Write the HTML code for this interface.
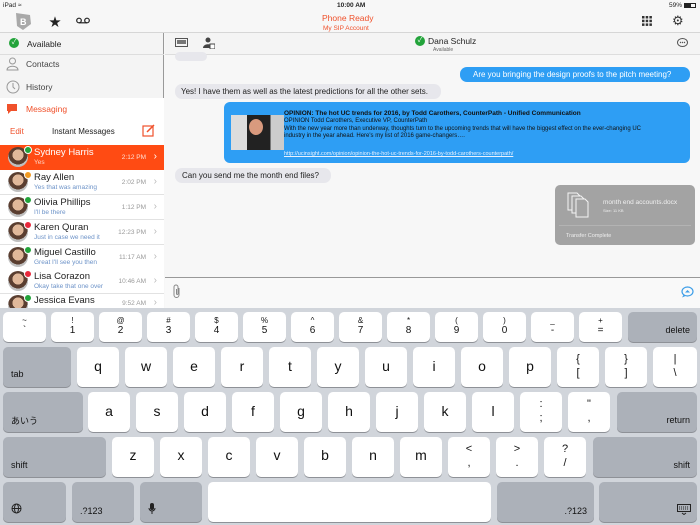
<!DOCTYPE html>
<html><head><meta charset="utf-8"><style>
*{margin:0;padding:0;box-sizing:border-box}
body{width:700px;height:525px;overflow:hidden;background:#f7f7f7;font-family:"Liberation Sans","Noto Sans CJK JP",sans-serif;position:relative;color:#222}
.a{position:absolute;white-space:nowrap}
.k{position:absolute;background:#fff;border-radius:5px;box-shadow:0 1px 0 #8e9197;text-align:center;color:#111}
.g{background:#acb1b9;color:#111}
.row{position:absolute;left:0;width:164px;height:25px;background:#fff;border-bottom:1px solid #e2e2e2}
.av{position:absolute;left:8px;top:2px;width:20px;height:20px;border-radius:50%;background:radial-gradient(circle at 50% 40%,#e0b89a 0 35%,#5a3e30 36% 60%,#bfbfbf 61%)}
.st{position:absolute;left:24px;top:1px;width:8px;height:8px;border-radius:50%;border:1px solid #fff}
.nm{position:absolute;left:34px;top:2px;font-size:9.5px;color:#222;white-space:nowrap}
.ms{position:absolute;left:34px;top:14px;font-size:6.5px;color:#6d93c8;white-space:nowrap}
.tm{position:absolute;right:18px;top:9px;font-size:6.5px;color:#999}
.ch{position:absolute;right:7px;top:6px;font-size:10px;color:#bbb}
</style></head><body>
<div class="a" style="left:0;top:0;width:700px;height:33px;background:#f7f7f7;border-bottom:1px solid #d6d6d6"></div>
<div class="a" style="left:3px;top:2px;font-size:6.5px">iPad ≈</div>
<div class="a" style="left:337px;top:2px;font-size:6.5px;font-weight:bold">10:00 AM</div>
<div class="a" style="left:669px;top:2px;font-size:6.5px">59%</div>
<div class="a" style="left:684px;top:3px;width:12px;height:5px;border:1px solid #222;"><div style="width:6px;height:3px;background:#222"></div></div>
<svg class="a" style="left:14px;top:12px" width="18" height="19"><path d="M2 1L16 3L17 12L9 18L3 14Z" fill="#a9a9a9"/><text x="6" y="13" font-size="9" fill="#fff" font-family="Liberation Sans" font-weight="bold">B</text></svg>
<div class="a" style="left:49px;top:13px;font-size:12px">★</div>
<svg class="a" style="left:76px;top:17px" width="14" height="7"><circle cx="3" cy="3.5" r="2.3" fill="none" stroke="#222" stroke-width="1.2"/><circle cx="11" cy="3.5" r="2.3" fill="none" stroke="#222" stroke-width="1.2"/><line x1="3" y1="5.8" x2="11" y2="5.8" stroke="#222" stroke-width="1.2"/></svg>
<div class="a" style="left:322px;top:13px;font-size:8.5px;color:#f0512b">Phone Ready</div>
<div class="a" style="left:323px;top:25px;font-size:6.5px;color:#f0512b">My SIP Account</div>
<svg class="a" style="left:642px;top:16px" width="10" height="10"><g fill="#333"><rect x="0" y="0" width="2.5" height="2.5"/><rect x="3.7" y="0" width="2.5" height="2.5"/><rect x="7.4" y="0" width="2.5" height="2.5"/><rect x="0" y="3.7" width="2.5" height="2.5"/><rect x="3.7" y="3.7" width="2.5" height="2.5"/><rect x="7.4" y="3.7" width="2.5" height="2.5"/><rect x="0" y="7.4" width="2.5" height="2.5"/><rect x="3.7" y="7.4" width="2.5" height="2.5"/><rect x="7.4" y="7.4" width="2.5" height="2.5"/></g></svg>
<div class="a" style="left:672px;top:13px;font-size:13px;color:#333">⚙</div>

<div class="a" style="left:0;top:33px;width:164px;height:277px;background:#f4f4f4;border-right:1px solid #999"></div>
<div class="a" style="left:0;top:33px;width:164px;height:22px;border-bottom:1px solid #ddd"></div>
<div class="a" style="left:9px;top:38px;width:10px;height:10px;border-radius:50%;background:#22a33a;color:#fff;font-size:7px;text-align:center;line-height:10px">✓</div>
<div class="a" style="left:27px;top:39px;font-size:8.5px">Available</div>
<svg class="a" style="left:6px;top:57px" width="13" height="14"><circle cx="6.5" cy="4" r="3" fill="none" stroke="#999"/><path d="M1 13C1 8 12 8 12 13Z" fill="none" stroke="#999"/></svg>
<div class="a" style="left:26px;top:59px;font-size:8.5px;color:#444">Contacts</div>
<svg class="a" style="left:6px;top:80px" width="14" height="14"><circle cx="7" cy="7" r="6" fill="none" stroke="#999"/><path d="M7 3V7L9 9" fill="none" stroke="#999"/></svg>
<div class="a" style="left:26px;top:82px;font-size:8.5px;color:#444">History</div>
<div class="a" style="left:0;top:98px;width:164px;height:47px;background:#fff"></div>
<svg class="a" style="left:6px;top:103px" width="12" height="12"><path d="M1 1H11V8H5L2 11V8H1Z" fill="#f0512b"/></svg>
<div class="a" style="left:26px;top:104px;font-size:8.5px;color:#f0512b">Messaging</div>
<div class="a" style="left:10px;top:127px;font-size:8px;color:#f0512b">Edit</div>
<div class="a" style="left:52px;top:127px;font-size:8px;color:#222">Instant Messages</div>
<svg class="a" style="left:142px;top:124px" width="13" height="13"><rect x="1" y="2" width="10" height="10" fill="none" stroke="#f0512b" stroke-width="1.2"/><path d="M5 8L12 1" stroke="#f0512b" stroke-width="1.5"/></svg>

<div class="row" style="top:145px;background:#ff4b13;border:none"><div class="av"></div><div class="st" style="background:#22a33a"></div><div class="nm" style="color:#fff">Sydney Harris</div><div class="ms" style="color:#ffd2c2">Yes</div><div class="tm" style="color:#ffe0d5">2:12 PM</div><div class="ch" style="color:#fff">›</div></div>
<div class="row" style="top:170px"><div class="av"></div><div class="st" style="background:#f19a22"></div><div class="nm">Ray Allen</div><div class="ms">Yes that was amazing</div><div class="tm">2:02 PM</div><div class="ch">›</div></div>
<div class="row" style="top:195px"><div class="av"></div><div class="st" style="background:#22a33a"></div><div class="nm">Olivia Phillips</div><div class="ms">I'll be there</div><div class="tm">1:12 PM</div><div class="ch">›</div></div>
<div class="row" style="top:220px"><div class="av"></div><div class="st" style="background:#e8283a"></div><div class="nm">Karen Quran</div><div class="ms">Just in case we need it</div><div class="tm">12:23 PM</div><div class="ch">›</div></div>
<div class="row" style="top:245px"><div class="av"></div><div class="st" style="background:#22a33a"></div><div class="nm">Miguel Castillo</div><div class="ms">Great I'll see you then</div><div class="tm">11:17 AM</div><div class="ch">›</div></div>
<div class="row" style="top:269px"><div class="av"></div><div class="st" style="background:#e8283a"></div><div class="nm">Lisa Corazon</div><div class="ms">Okay take that one over</div><div class="tm">10:46 AM</div><div class="ch">›</div></div>
<div class="row" style="top:294px;height:16px;overflow:hidden;border:none"><div class="av" style="top:1px"></div><div class="st" style="background:#22a33a;top:0"></div><div class="nm" style="top:1px">Jessica Evans</div><div class="tm" style="top:6px">9:52 AM</div><div class="ch" style="top:3px">›</div></div>

<div class="a" style="left:165px;top:33px;width:535px;height:22px;background:#f4f4f4;border-bottom:1px solid #ddd"></div>
<svg class="a" style="left:175px;top:38px" width="13" height="10"><rect x="0.5" y="0.5" width="12" height="8" fill="none" stroke="#555"/><rect x="2" y="2" width="9" height="4" fill="#777"/></svg>
<svg class="a" style="left:203px;top:37px" width="12" height="12"><circle cx="5" cy="3" r="2.5" fill="#444"/><path d="M0 11C0 6 10 6 10 11Z" fill="#444"/><rect x="7" y="7" width="5" height="5" fill="#fff" stroke="#444"/></svg>
<div class="a" style="left:415px;top:36px;width:10px;height:10px;border-radius:50%;background:#22a33a;color:#fff;font-size:7px;text-align:center;line-height:10px">✓</div>
<div class="a" style="left:428px;top:36px;font-size:8.5px">Dana Schulz</div>
<div class="a" style="left:433px;top:47px;font-size:5px;color:#666">Available</div>
<svg class="a" style="left:677px;top:38px" width="11" height="10"><ellipse cx="5.5" cy="4.5" rx="5" ry="4" fill="none" stroke="#555"/><circle cx="3.5" cy="4.5" r=".7" fill="#555"/><circle cx="5.5" cy="4.5" r=".7" fill="#555"/><circle cx="7.5" cy="4.5" r=".7" fill="#555"/></svg>

<div class="a" style="left:175px;top:52px;width:32px;height:9px;background:#e7e7ec;border-radius:6px"></div>
<div class="a" style="left:460px;top:67px;width:230px;height:15px;background:#2e9ef4;border-radius:7px;color:#fff;font-size:8px;line-height:15px;padding-left:13px">Are you bringing the design proofs to the pitch meeting?</div>
<div class="a" style="left:175px;top:84px;width:266px;height:15px;background:#e7e7ec;border-radius:7px;font-size:8px;line-height:15px;padding-left:6px">Yes! I have them as well as the latest predictions for all the other sets.</div>
<div class="a" style="left:224px;top:102px;width:466px;height:61px;background:#2e9ef4;border-radius:6px"></div>
<div class="a" style="left:231px;top:115px;width:53px;height:35px;background:linear-gradient(90deg,#ddd 0 30%,#222 30% 75%,#ccc 75%)"><div style="position:absolute;left:18px;top:4px;width:14px;height:16px;border-radius:50%;background:#d99a7e"></div></div>
<div class="a" style="left:284px;top:110px;font-size:6.5px;font-weight:bold;color:#111">OPINION: The hot UC trends for 2016, by Todd Carothers, CounterPath - Unified Communication</div>
<div class="a" style="left:284px;top:118px;font-size:6px;color:#111;line-height:7.5px">OPINION Todd Carothers, Executive VP, CounterPath<br>With the new year more than underway, thoughts turn to the upcoming trends that will have the biggest effect on the ever-changing UC<br>industry in the year ahead. Here's my list of 2016 game-changers….</div>
<div class="a" style="left:284px;top:151px;font-size:5.5px;color:#e8f2ff;text-decoration:underline">http://ucinsight.com/opinion/opinion-the-hot-uc-trends-for-2016-by-todd-carothers-counterpath/</div>
<div class="a" style="left:175px;top:168px;width:156px;height:15px;background:#e7e7ec;border-radius:7px;font-size:8px;line-height:15px;padding-left:7px">Can you send me the month end files?</div>
<div class="a" style="left:555px;top:185px;width:140px;height:60px;background:#a3a3a3;border-radius:5px"></div>
<svg class="a" style="left:567px;top:192px" width="26" height="27"><g fill="#a3a3a3" stroke="#f4f4f4" stroke-width="1"><path d="M1 1H10L13 4V18H1Z"/><path d="M5 4H14L17 7V21H5Z"/><path d="M9 7H18L21 10V25H9Z"/></g></svg>
<div class="a" style="left:603px;top:199px;font-size:6.5px;color:#f0f0f0">month end accounts.docx</div>
<div class="a" style="left:603px;top:208px;font-size:4px;color:#eee">Size: 11 KB</div>
<div class="a" style="left:559px;top:225px;width:132px;height:1px;background:#b3b3b3"></div>
<div class="a" style="left:566px;top:233px;font-size:5.5px;color:#eee">Transfer Complete</div>

<div class="a" style="left:165px;top:277px;width:535px;height:1px;background:#999"></div>
<div class="a" style="left:165px;top:278px;width:535px;height:30px;background:#f9f9f9"></div>
<svg class="a" style="left:173px;top:284px" width="9" height="15"><path d="M6 4V11A2.5 2.5 0 0 1 1 11V3A2 2 0 0 1 5 3V10A.8 .8 0 0 1 3.5 10V5" fill="none" stroke="#888" stroke-width="1"/></svg>
<svg class="a" style="left:681px;top:286px" width="13" height="12"><ellipse cx="6.5" cy="5.5" rx="5.5" ry="4.5" fill="none" stroke="#3c9de8" stroke-width="1.2"/><path d="M4 6.5L6.5 4L9 6.5" fill="#3c9de8"/><path d="M2.5 9L1 11.5L4.5 10" fill="#3c9de8"/></svg>

<div class="a" style="left:0;top:308px;width:700px;height:217px;background:#d1d5db"></div>
<div id="kb"></div>
<script>
var h='';
function key(x,y,w,hh,t,g,fs,al){h+='<div class="k'+(g?' g':'')+'" style="left:'+x+'px;top:'+y+'px;width:'+w+'px;height:'+hh+'px;'+(al||'')+'">'+t+'</div>';}
var r1=[['~','`'],['!','1'],['@','2'],['#','3'],['$','4'],['%','5'],['^','6'],['&','7'],['*','8'],['(','9'],[')','0'],['_','-'],['+','=']];
for(var i=0;i<13;i++)key(3+48*i,312,43,30,'<div style="font-size:8px;line-height:10px;padding-top:4px">'+r1[i][0]+'<br><span style="font-size:10px">'+r1[i][1]+'</span></div>');
key(628,312,69,30,'delete',1,0,'font-size:9px;text-align:right;padding:13px 7px 0 0');
key(3,347,68,40,'tab',1,0,'font-size:9px;text-align:left;padding:22px 0 0 8px');
var r2='qwertyuiop';for(i=0;i<10;i++)key(77+48*i,347,42,40,r2[i],0,0,'font-size:14px;line-height:38px');
var b2=[['{','['],['}',']']];
for(i=0;i<2;i++)key(557+48*i,347,42,40,'<div style="font-size:11px;line-height:14px;padding-top:5px">'+b2[i][0]+'<br>'+b2[i][1]+'</div>');
key(653,347,44,40,'<div style="font-size:11px;line-height:14px;padding-top:5px">|<br>\\</div>');
key(3,392,80,40,'あいう',1,0,'font-size:9px;text-align:left;padding:22px 0 0 8px');
var r3='asdfghjkl';for(i=0;i<9;i++)key(88+48*i,392,42,40,r3[i],0,0,'font-size:14px;line-height:38px');
key(520,392,42,40,'<div style="font-size:11px;line-height:14px;padding-top:5px">:<br>;</div>');
key(568,392,42,40,'<div style="font-size:11px;line-height:14px;padding-top:5px">"<br>,</div>');
key(617,392,80,40,'return',1,0,'font-size:9px;text-align:right;padding:23px 7px 0 0');
key(3,437,103,40,'shift',1,0,'font-size:9px;text-align:left;padding:23px 0 0 8px');
var r4='zxcvbnm';for(i=0;i<7;i++)key(112+48*i,437,42,40,r4[i],0,0,'font-size:14px;line-height:36px');
var b4=[['&lt;',','],['&gt;','.'],['?','/']];
for(i=0;i<3;i++)key(448+48*i,437,42,40,'<div style="font-size:11px;line-height:14px;padding-top:5px">'+b4[i][0]+'<br>'+b4[i][1]+'</div>');
key(593,437,104,40,'shift',1,0,'font-size:9px;text-align:right;padding:23px 7px 0 0');
key(3,482,63,40,'<svg width="11" height="11" style="margin-top:21px"><circle cx="5.5" cy="5.5" r="4.5" fill="none" stroke="#222"/><ellipse cx="5.5" cy="5.5" rx="2" ry="4.5" fill="none" stroke="#222"/><line x1="1" y1="5.5" x2="10" y2="5.5" stroke="#222"/></svg>',1,0,'text-align:left;padding-left:8px');
key(72,482,62,40,'.?123',1,0,'font-size:9px;text-align:left;padding:24px 0 0 8px');
key(140,482,62,40,'<svg width="8" height="12" style="margin-top:21px"><rect x="2" y="0" width="4" height="7" rx="2" fill="#222"/><path d="M1 5A3 3 0 0 0 7 5M4 8V11" fill="none" stroke="#222"/></svg>',1,0,'text-align:left;padding-left:8px');
key(208,482,283,40,'');
key(497,482,97,40,'.?123',1,0,'font-size:9px;text-align:right;padding:24px 7px 0 0');
key(599,482,98,40,'<svg width="14" height="11" style="margin-top:22px"><rect x=".5" y=".5" width="13" height="7" fill="none" stroke="#222"/><path d="M2 3H12M2 5H12" stroke="#222" stroke-dasharray="1 1"/><path d="M5 9L7 10.5L9 9" fill="none" stroke="#222"/></svg>',1,0,'text-align:right;padding-right:6px');
document.getElementById('kb').innerHTML=h;
</script>
</body></html>
